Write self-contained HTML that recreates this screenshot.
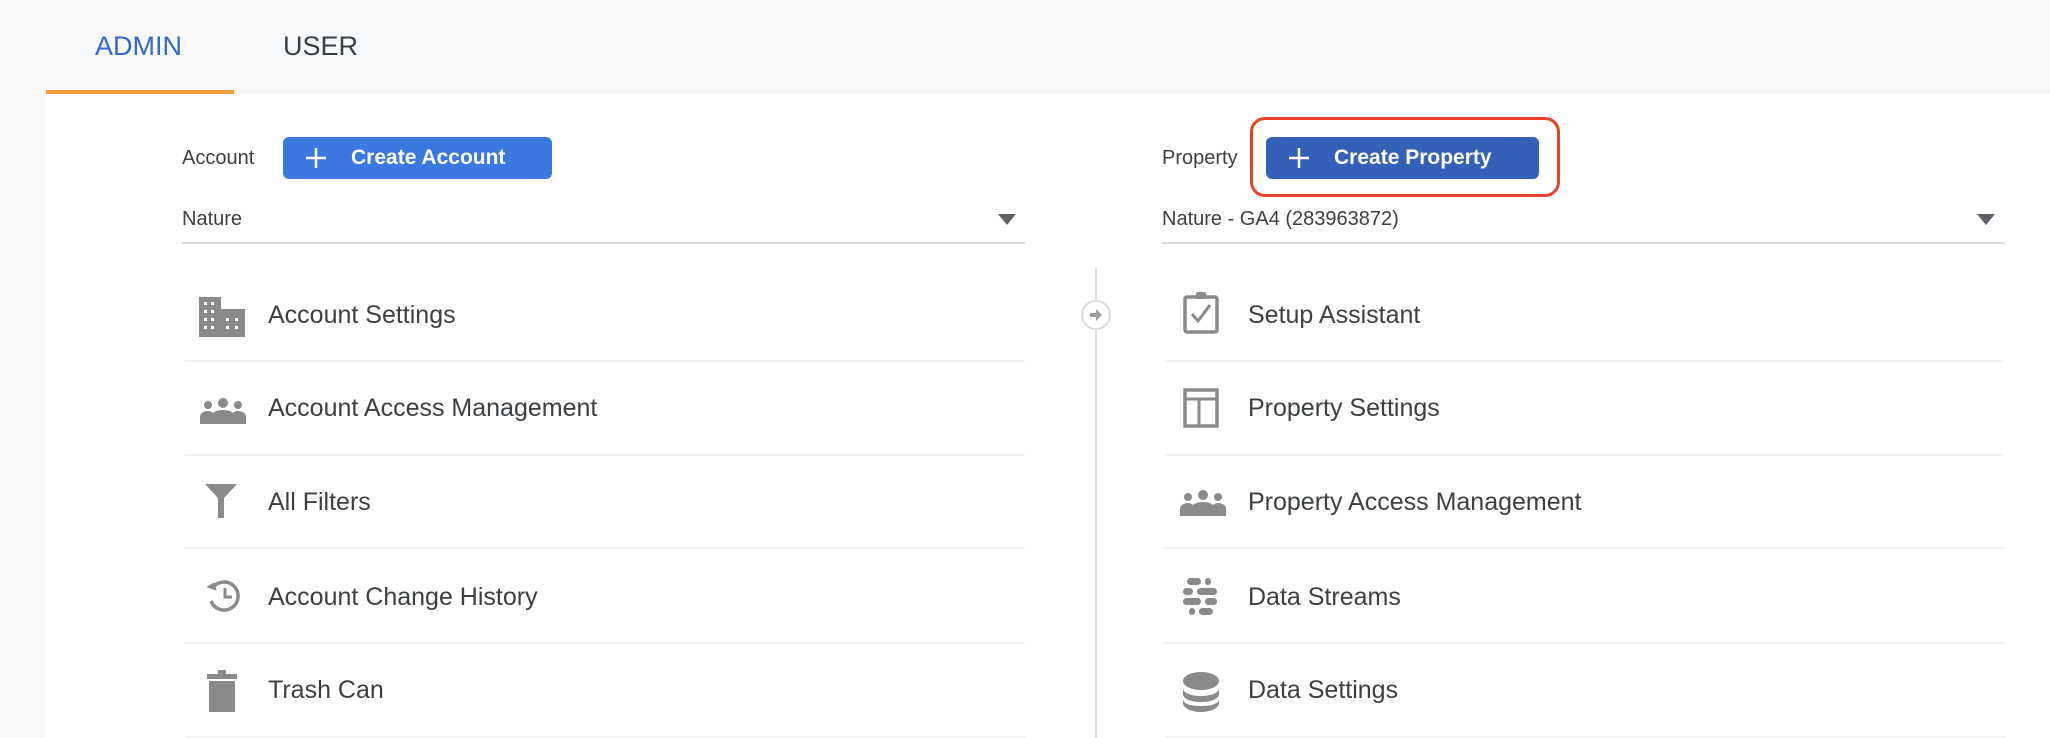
<!DOCTYPE html>
<html><head><meta charset="utf-8"><style>
*{margin:0;padding:0;box-sizing:border-box}
body{width:2050px;height:738px;background:#f8f9fa;font-family:"Liberation Sans",Arial,sans-serif;position:relative;overflow:hidden;color:#3c4043}
.abs{position:absolute}
.tab{position:absolute;top:30px;font-size:27px;line-height:32px}
.panel{position:absolute;left:46px;top:94px;width:2004px;height:644px;background:#fff}
.lbl{position:absolute;font-size:20px;line-height:24px;color:#3c4043}
.btn{position:absolute;height:42px;border-radius:6px;color:#fff;font-size:21px;font-weight:bold;line-height:42px;padding-left:68px}
.btn svg{position:absolute;left:22px;top:10px}
.sel{position:absolute;font-size:20px;line-height:24px}
.line{position:absolute;height:2px;background:#dadce0}
.tri{position:absolute;width:0;height:0;border-left:9px solid transparent;border-right:9px solid transparent;border-top:11px solid #5f6368}
.row{position:absolute;font-size:25px;line-height:30px;color:#3c4043}
.sep{position:absolute;height:2px;background:#f1f3f4}
.ic{position:absolute}
</style></head><body>
<div class="tab" style="left:95px;color:#3367d6">ADMIN</div>
<div class="tab" style="left:283px;color:#3c4043">USER</div>
<div class="abs" style="left:46px;top:90px;width:188px;height:4px;background:#f29d38"></div>
<div class="panel"></div>

<div class="lbl" style="left:182px;top:146px">Account</div>
<div class="btn" style="left:283px;top:137px;width:269px;background:#3b78e0"><svg width="22" height="22" viewBox="0 0 22 22"><path d="M11 1V21M1 11H21" stroke="#fff" stroke-width="2.5"/></svg>Create Account</div>
<div class="sel" style="left:182px;top:207px">Nature</div>
<div class="tri" style="left:998px;top:214px"></div>
<div class="line" style="left:182px;top:242px;width:843px"></div>

<div class="lbl" style="left:1162px;top:146px">Property</div>
<div class="abs" style="left:1250px;top:117px;width:310px;height:80px;border:3px solid #e8432b;border-radius:15px"></div>
<div class="btn" style="left:1266px;top:137px;width:273px;background:#3461b8"><svg width="22" height="22" viewBox="0 0 22 22"><path d="M11 1V21M1 11H21" stroke="#fff" stroke-width="2.5"/></svg>Create Property</div>
<div class="sel" style="left:1162px;top:207px">Nature - GA4 (283963872)</div>
<div class="tri" style="left:1977px;top:214px"></div>
<div class="line" style="left:1162px;top:242px;width:843px"></div>

<div class="abs" style="left:1095px;top:268px;width:2px;height:470px;background:#dadce0"></div>
<div class="abs" style="left:1081px;top:300px;width:30px;height:30px;border-radius:50%;background:#fff;border:2px solid #dadce0"></div>
<svg class="ic" style="left:1088px;top:308px" width="16" height="14" viewBox="0 0 16 14"><path d="M2 5H8V1L14 7L8 13V9H2Z" fill="#9e9e9e"/></svg>

<svg class="ic" style="left:199px;top:297px" width="46" height="40" viewBox="0 0 46 40"><path d="M0 0H22V12H46V40H0Z" fill="#8a8a8a"/><g fill="#fff"><rect x="5" y="5" width="3" height="3"/><rect x="12" y="5" width="3" height="3"/><rect x="5" y="13" width="3" height="3"/><rect x="12" y="13" width="3" height="3"/><rect x="5" y="21" width="3" height="3"/><rect x="12" y="21" width="3" height="3"/><rect x="5" y="29" width="3" height="3"/><rect x="12" y="29" width="3" height="3"/><rect x="27" y="21" width="3" height="3"/><rect x="36" y="21" width="3" height="3"/><rect x="27" y="29" width="3" height="3"/><rect x="36" y="29" width="3" height="3"/></g></svg>
<div class="row" style="left:268px;top:300px">Account Settings</div>
<div class="sep" style="left:185px;top:360px;width:840px"></div>

<svg class="ic" style="left:200px;top:398px" width="46" height="26" viewBox="0 0 46 26"><g fill="#8a8a8a"><circle cx="8" cy="7" r="4"/><circle cx="23" cy="5" r="5"/><circle cx="38" cy="7" r="4"/><path d="M0 26V19C0 15 4 13 8 13C10 13 12 14 13 15C15 13 19 12 23 12C27 12 31 13 33 15C34 14 36 13 38 13C42 13 46 15 46 19V26Z"/></g></svg>
<div class="row" style="left:268px;top:393px">Account Access Management</div>
<div class="sep" style="left:185px;top:454px;width:840px"></div>

<svg class="ic" style="left:205px;top:484px" width="32" height="34" viewBox="0 0 32 34"><path d="M0 0H32L19 14V34H13V14Z" fill="#8a8a8a"/></svg>
<div class="row" style="left:268px;top:487px">All Filters</div>
<div class="sep" style="left:185px;top:547px;width:840px"></div>

<svg class="ic" style="left:206px;top:579px" width="34" height="34" viewBox="0 0 34 34"><path d="M6 10A14 14 0 1 1 5 22" stroke="#8a8a8a" stroke-width="3.5" fill="none"/><path d="M0 10H11L6 3Z" fill="#8a8a8a" transform="rotate(20 6 10)"/><path d="M19 9V18H26" stroke="#8a8a8a" stroke-width="3" fill="none"/></svg>
<div class="row" style="left:268px;top:582px">Account Change History</div>
<div class="sep" style="left:185px;top:642px;width:840px"></div>

<svg class="ic" style="left:207px;top:670px" width="30" height="42" viewBox="0 0 30 42"><g fill="#8a8a8a"><rect x="11" y="0" width="8" height="4"/><rect x="0" y="4" width="30" height="5"/><rect x="2" y="11" width="26" height="31"/></g></svg>
<div class="row" style="left:268px;top:675px">Trash Can</div>
<div class="sep" style="left:185px;top:736px;width:840px"></div>

<svg class="ic" style="left:1183px;top:292px" width="36" height="42" viewBox="0 0 36 42"><rect x="2" y="5" width="32" height="35" rx="2" fill="none" stroke="#8a8a8a" stroke-width="3.5"/><rect x="13" y="0" width="10" height="7" rx="2" fill="#8a8a8a"/><path d="M9 22L15 29L27 13" stroke="#8a8a8a" stroke-width="3" fill="none"/></svg>
<div class="row" style="left:1248px;top:300px">Setup Assistant</div>
<div class="sep" style="left:1165px;top:360px;width:840px"></div>

<svg class="ic" style="left:1183px;top:388px" width="36" height="40" viewBox="0 0 36 40"><rect x="2" y="2" width="32" height="36" fill="none" stroke="#8a8a8a" stroke-width="3.5"/><path d="M2 11H34M16 11V38" stroke="#8a8a8a" stroke-width="3"/></svg>
<div class="row" style="left:1248px;top:393px">Property Settings</div>
<div class="sep" style="left:1165px;top:454px;width:840px"></div>

<svg class="ic" style="left:1180px;top:490px" width="46" height="26" viewBox="0 0 46 26"><g fill="#8a8a8a"><circle cx="8" cy="7" r="4"/><circle cx="23" cy="5" r="5"/><circle cx="38" cy="7" r="4"/><path d="M0 26V19C0 15 4 13 8 13C10 13 12 14 13 15C15 13 19 12 23 12C27 12 31 13 33 15C34 14 36 13 38 13C42 13 46 15 46 19V26Z"/></g></svg>
<div class="row" style="left:1248px;top:487px">Property Access Management</div>
<div class="sep" style="left:1165px;top:547px;width:840px"></div>

<svg class="ic" style="left:1183px;top:578px" width="36" height="38" viewBox="0 0 36 38"><g fill="#8a8a8a"><rect x="4" y="0" width="14" height="7" rx="3.5"/><rect x="22" y="0" width="6" height="7" rx="3"/><rect x="0" y="10" width="10" height="7" rx="3.5"/><rect x="14" y="10" width="20" height="7" rx="3.5"/><rect x="0" y="20" width="18" height="7" rx="3.5"/><rect x="22" y="20" width="12" height="7" rx="3.5"/><rect x="6" y="30" width="6" height="7" rx="3"/><rect x="16" y="30" width="14" height="7" rx="3.5"/></g></svg>
<div class="row" style="left:1248px;top:582px">Data Streams</div>
<div class="sep" style="left:1165px;top:642px;width:840px"></div>

<svg class="ic" style="left:1183px;top:672px" width="36" height="40" viewBox="0 0 36 40"><g fill="#8a8a8a"><ellipse cx="18" cy="9" rx="18" ry="9"/><path d="M0 16C0 21 8 24 18 24C28 24 36 21 36 16V22C36 27 28 30 18 30C8 30 0 27 0 22Z"/><path d="M0 27C0 32 8 34 18 34C28 34 36 32 36 27V31C36 36 28 40 18 40C8 40 0 36 0 31Z"/></g></svg>
<div class="row" style="left:1248px;top:675px">Data Settings</div>
<div class="sep" style="left:1165px;top:736px;width:840px"></div>
</body></html>
